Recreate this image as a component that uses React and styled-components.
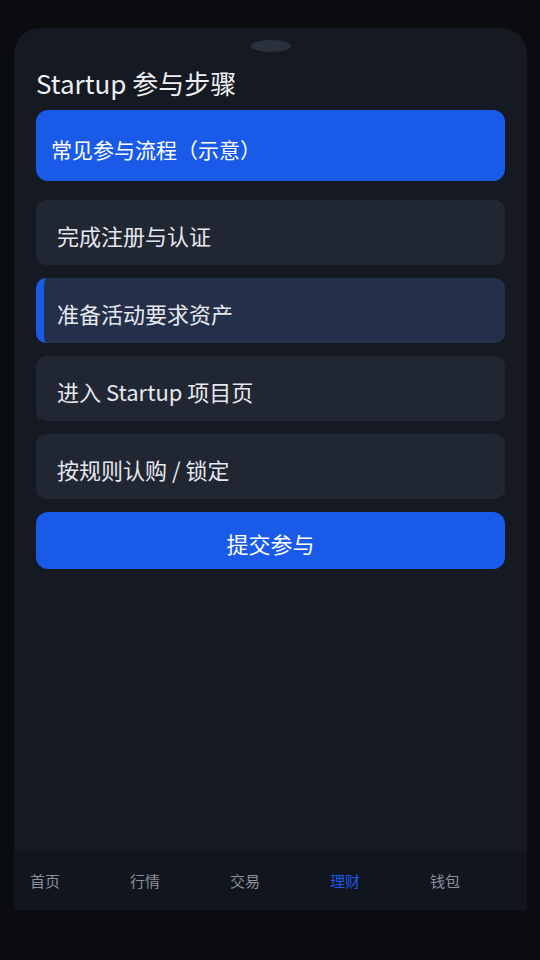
import styled, { createGlobalStyle } from "styled-components";

const GlobalStyle = createGlobalStyle`
  html, body {
    margin: 0;
    padding: 0;
    background: #0a0c10;
  }
  body {
    font-family: "Noto Sans CJK SC", "Noto Sans", sans-serif;
  }
`;

const Screen = styled.div`
  width: 540px;
  height: 960px;
  padding: 28px 0 0 14px;
  box-sizing: border-box;
  background: #0a0c10;
`;

const Phone = styled.div`
  width: 513px;
  height: 882px;
  background: #151922;
  border-radius: 26px 26px 0 0;
  display: flex;
  flex-direction: column;
  overflow: hidden;
`;

const Notch = styled.div`
  width: 40px;
  height: 12px;
  margin: 12px auto 0;
  border-radius: 50%;
  background: #2a313c;
  flex-shrink: 0;
`;

const Content = styled.div`
  flex: 1;
  padding: 0 22px;
  display: flex;
  flex-direction: column;
`;

const Title = styled.h1`
  margin: 13px 0 9px 0;
  font-size: 26px;
  font-weight: 400;
  line-height: 36px;
  color: #eef0f4;
`;

const HeaderCard = styled.div`
  height: 71px;
  box-sizing: border-box;
  padding: 6px 15px 0;
  display: flex;
  align-items: center;
  background: #1a5ae8;
  border-radius: 12px;
  color: #ffffff;
  font-size: 21px;
  margin-bottom: 19px;
`;

const StepList = styled.div`
  display: flex;
  flex-direction: column;
  gap: 13px;
`;

const Step = styled.div`
  height: 65px;
  box-sizing: border-box;
  padding: 5px 21px 0 ${(p) => (p.$active ? "13px" : "21px")};
  display: flex;
  align-items: center;
  border-radius: 10px;
  font-size: 22px;
  color: #e6e8ee;
  background: ${(p) => (p.$active ? "#24304a" : "#212633")};
  border-left: ${(p) => (p.$active ? "8px solid #1a5ae8" : "none")};
`;

const SubmitButton = styled.button`
  margin-top: 13px;
  height: 57px;
  border: none;
  border-radius: 12px;
  background: #1a5ae8;
  color: #ffffff;
  font-family: inherit;
  font-size: 22px;
  padding: 5px 0 0;
  cursor: pointer;
`;

const NavBar = styled.nav`
  height: 60px;
  flex-shrink: 0;
  background: #11151d;
  display: flex;
  align-items: center;
  padding: 0 0 0 16px;
`;

const NavItem = styled.div`
  width: 100px;
  flex-shrink: 0;
  font-size: 15px;
  color: ${(p) => (p.$active ? "#1a5ae8" : "#8a909c")};
`;

const steps = [
  "完成注册与认证",
  "准备活动要求资产",
  "进入 Startup 项目页",
  "按规则认购 / 锁定",
];

const navItems = ["首页", "行情", "交易", "理财", "钱包"];

export default function App() {
  return (
    <>
      <GlobalStyle />
      <Screen>
        <Phone>
          <Notch />
          <Content>
            <Title>Startup 参与步骤</Title>
            <HeaderCard>常见参与流程（示意）</HeaderCard>
            <StepList>
              {steps.map((s, i) => (
                <Step key={s} $active={i === 1}>
                  {s}
                </Step>
              ))}
            </StepList>
            <SubmitButton>提交参与</SubmitButton>
          </Content>
          <NavBar>
            {navItems.map((n) => (
              <NavItem key={n} $active={n === "理财"}>
                {n}
              </NavItem>
            ))}
          </NavBar>
        </Phone>
      </Screen>
    </>
  );
}
